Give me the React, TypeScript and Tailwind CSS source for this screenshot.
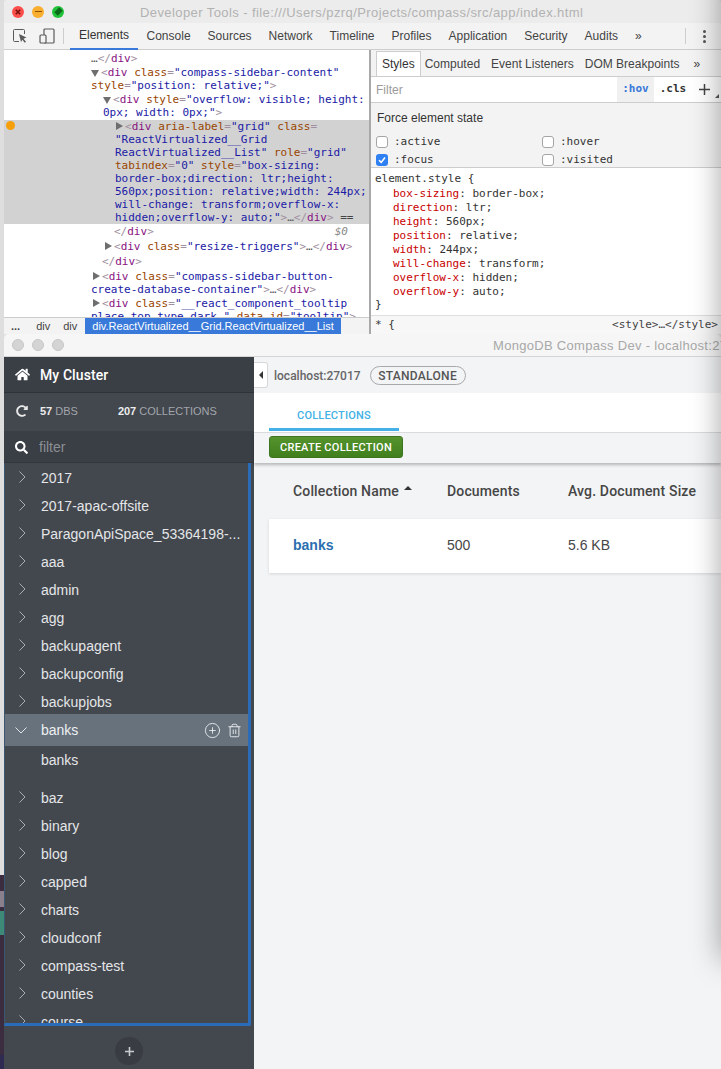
import type { ReactNode } from "react";
import { CirclePlus, Trash2 } from "lucide-react";
import { FaHome, FaRedoAlt, FaSearch } from "react-icons/fa";

const databases1 = ["2017", "2017-apac-offsite", "ParagonApiSpace_53364198-...", "aaa", "admin", "agg", "backupagent", "backupconfig", "backupjobs"];
const databases2 = ["baz", "binary", "blog", "capped", "charts", "cloudconf", "compass-test", "counties", "course"];
const styleProps = [
  ["box-sizing", "border-box"],
  ["direction", "ltr"],
  ["height", "560px"],
  ["position", "relative"],
  ["width", "244px"],
  ["will-change", "transform"],
  ["overflow-x", "hidden"],
  ["overflow-y", "auto"],
];

const T = ({ children }: { children: ReactNode }) => <span className="text-[#881280]">{children}</span>;
const A = ({ children }: { children: ReactNode }) => <span className="text-[#994500]">{children}</span>;
const V = ({ children }: { children: ReactNode }) => <span className="text-[#1a1aa6]">{children}</span>;
const P = ({ children }: { children: ReactNode }) => <span className="text-[#a08fa0]">{children}</span>;

const Line = ({ left, gap = "", children }: { left: string; gap?: string; children: ReactNode }) => (
  <div className={`h-[13px] leading-[13px] whitespace-pre ${left} ${gap}`}>{children}</div>
);

const Caret = ({ open }: { open?: boolean }) => (
  <span
    className={
      open
        ? "inline-block mr-[2px] mb-[-1px] w-0 h-0 border-x-[4px] border-x-transparent border-t-[7px] border-t-[#6e6e6e]"
        : "inline-block mr-[2px] ml-px w-0 h-0 border-y-[4px] border-y-transparent border-l-[7px] border-l-[#6e6e6e]"
    }
  />
);

const Chevron = ({ open }: { open?: boolean }) => (
  <svg width="14" height="14" viewBox="0 0 14 14" fill="none" stroke={open ? "#e4e7ea" : "#a9adb2"} strokeWidth="1">
    {open ? <path d="M1.5 4.5 7 10l5.5-5.5" /> : <path d="M4.5 1.5 10 7l-5.5 5.5" />}
  </svg>
);

const DbRow = ({ name }: { name: string }) => (
  <div className="h-7 shrink-0 flex items-center">
    <div className="w-[36px] pl-[10px] shrink-0">
      <Chevron />
    </div>
    <span className="mt-[2px] text-[14px] text-[#e4e6e8]">{name}</span>
  </div>
);

const TabLabel = ({ children, active }: { children: ReactNode; active?: boolean }) => (
  <div
    className={
      active
        ? "h-[27px] px-[9px] flex items-center text-[#333] border-b-2 border-[#3879d9]"
        : "h-[27px] px-[8.5px] flex items-center text-[#444]"
    }
  >
    {children}
  </div>
);

const StateBox = ({ label, checked }: { label: string; checked?: boolean }) => (
  <div className="flex items-center h-[18px]">
    {checked ? (
      <div className="w-[12px] h-[12px] rounded-[3px] bg-[#2f80f2] flex items-center justify-center">
        <svg width="10" height="10" viewBox="0 0 10 10" fill="none" stroke="#fff" strokeWidth="1.6">
          <path d="M2 5.2 4.2 7.4 8 2.6" />
        </svg>
      </div>
    ) : (
      <div className="w-[12px] h-[12px] rounded-[3px] bg-white border border-[#a5a5a5]" />
    )}
    <span className="ml-[6px] font-['DejaVu_Sans_Mono',monospace] text-[11px] text-[#333]">{label}</span>
  </div>
);

const Light = ({ className, children }: { className: string; children?: ReactNode }) => (
  <div className={`w-3 h-3 rounded-full flex items-center justify-center ${className}`}>{children}</div>
);

function DevTools() {
  return (
    <div className="h-[334px] flex flex-col bg-white rounded-t-[5px] overflow-hidden font-['Liberation_Sans',sans-serif] shrink-0">
      <div className="h-[23px] bg-[#ececec] shrink-0 flex items-center relative">
        <div className="flex gap-2 pl-2">
          <Light className="bg-[#fb4f4b]">
            <svg width="6" height="6" viewBox="0 0 6 6" stroke="#7a0f0c" strokeWidth="1.6">
              <path d="M.8.8l4.4 4.4M5.2.8.8 5.2" />
            </svg>
          </Light>
          <Light className="bg-[#f9ae2f]">
            <div className="w-[7px] h-[1.5px] bg-[#8a5200]" />
          </Light>
          <Light className="bg-[#22c13a]">
            <div className="w-[7px] h-[5px] bg-[#0a6a1a] rotate-[-45deg]" />
          </Light>
        </div>
        <span className="ml-[76px] mt-[2px] text-[13px] text-[#b2b2b2] tracking-[0.41px] whitespace-nowrap">
          Developer Tools - file:///Users/pzrq/Projects/compass/src/app/index.html
        </span>
      </div>

      <div className="h-[27px] bg-[#f3f3f3] border-b border-[#cdcdcd] shrink-0 flex items-center text-[12px]">
        <svg className="ml-[9px]" width="14" height="14" viewBox="0 0 14 14" fill="none">
          <path d="M6 12.5H1.5a1 1 0 0 1-1-1V1.5a1 1 0 0 1 1-1h9a1 1 0 0 1 1 1V5" stroke="#5a5a5a" strokeWidth="1" />
          <path d="M6 5l7.5 3.5-3 1.2 2.5 3-1.2 1-2.4-3L8 13z" fill="#5a5a5a" />
        </svg>
        <svg className="ml-[12px]" width="16" height="16" viewBox="0 0 16 16" fill="none" stroke="#5a5a5a" strokeWidth="1.2">
          <rect x="5" y="1" width="10" height="14" rx="1" />
          <rect x="1" y="7" width="6" height="8" rx="1" fill="#f3f3f3" />
        </svg>
        <div className="ml-[8px] w-px h-4 bg-[#cdcdcd]" />
        <div className="ml-[6px] flex">
          <TabLabel active>Elements</TabLabel>
          <TabLabel>Console</TabLabel>
          <TabLabel>Sources</TabLabel>
          <TabLabel>Network</TabLabel>
          <TabLabel>Timeline</TabLabel>
          <TabLabel>Profiles</TabLabel>
          <TabLabel>Application</TabLabel>
          <TabLabel>Security</TabLabel>
          <TabLabel>Audits</TabLabel>
          <TabLabel>»</TabLabel>
        </div>
        <div className="ml-auto w-px h-4 bg-[#cdcdcd]" />
        <svg className="ml-[17px] mr-[15px]" width="3" height="13" viewBox="0 0 3 13" fill="#555">
          <circle cx="1.5" cy="1.5" r="1.5" />
          <circle cx="1.5" cy="6.5" r="1.5" />
          <circle cx="1.5" cy="11.5" r="1.5" />
        </svg>
      </div>

      <div className="flex-1 flex min-h-0">
        <div className="w-[366px] shrink-0 flex flex-col border-r border-[#a9a9a9] min-h-0">
          <div className="h-[267px] overflow-hidden font-['DejaVu_Sans_Mono',monospace] text-[11px] pt-[2px] shrink-0">
            <Line left="pl-[87px]">
              <span className="text-[#555]">…</span><P>&lt;/</P><T>div</T><P>&gt;</P>
            </Line>
            <Line left="pl-[87px]" gap="mt-px">
              <Caret open /><P>&lt;</P><T>div</T> <A>class</A><P>=</P><V>"compass-sidebar-content"</V>
            </Line>
            <Line left="pl-[87px]">
              <A>style</A><P>=</P><V>"position: relative;"</V><P>&gt;</P>
            </Line>
            <Line left="pl-[99px]" gap="mt-px">
              <Caret open /><P>&lt;</P><T>div</T> <A>style</A><P>=</P><V>"overflow: visible; height:</V>
            </Line>
            <Line left="pl-[99px]">
              <V>0px; width: 0px;"</V><P>&gt;</P>
            </Line>
            <div className="bg-[#d2d2d2] relative mt-px">
              <div className="absolute left-[2px] top-[1px] w-[9px] h-[9px] rounded-full bg-[#f59f0b]" />
              <Line left="pl-[111px]">
                <Caret /><P>&lt;</P><T>div</T> <A>aria-label</A><P>=</P><V>"grid"</V> <A>class</A><P>=</P>
              </Line>
              <Line left="pl-[111px]"><V>"ReactVirtualized__Grid</V></Line>
              <Line left="pl-[111px]">
                <V>ReactVirtualized__List"</V> <A>role</A><P>=</P><V>"grid"</V>
              </Line>
              <Line left="pl-[111px]">
                <A>tabindex</A><P>=</P><V>"0"</V> <A>style</A><P>=</P><V>"box-sizing:</V>
              </Line>
              <Line left="pl-[111px]"><V>border-box;direction: ltr;height:</V></Line>
              <Line left="pl-[111px]"><V>560px;position: relative;width: 244px;</V></Line>
              <Line left="pl-[111px]"><V>will-change: transform;overflow-x:</V></Line>
              <Line left="pl-[111px]">
                <V>hidden;overflow-y: auto;"</V><P>&gt;</P><span className="text-[#555]">…</span><P>&lt;/</P><T>div</T><P>&gt;</P> <span className="text-[#444]">==</span>
              </Line>
            </div>
            <Line left="pl-[110px] pr-[21px] flex justify-between" gap="mt-px">
              <span><P>&lt;/</P><T>div</T><P>&gt;</P></span>
              <span className="italic text-[#8a8a8a]">$0</span>
            </Line>
            <Line left="pl-[100px]" gap="mt-[2px]">
              <Caret /><P>&lt;</P><T>div</T> <A>class</A><P>=</P><V>"resize-triggers"</V><P>&gt;</P><span className="text-[#555]">…</span><P>&lt;/</P><T>div</T><P>&gt;</P>
            </Line>
            <Line left="pl-[98px]" gap="mt-[2px]">
              <P>&lt;/</P><T>div</T><P>&gt;</P>
            </Line>
            <Line left="pl-[88px]" gap="mt-[2px]">
              <Caret /><P>&lt;</P><T>div</T> <A>class</A><P>=</P><V>"compass-sidebar-button-</V>
            </Line>
            <Line left="pl-[87px]">
              <V>create-database-container"</V><P>&gt;</P><span className="text-[#555]">…</span><P>&lt;/</P><T>div</T><P>&gt;</P>
            </Line>
            <Line left="pl-[88px]" gap="mt-px">
              <Caret /><P>&lt;</P><T>div</T> <A>class</A><P>=</P><V>"__react_component_tooltip</V>
            </Line>
            <Line left="pl-[87px]">
              <V>place-top type-dark "</V> <A>data-id</A><P>=</P><V>"tooltip"</V><P>&gt;</P>
            </Line>
          </div>
          <div className="flex-1 bg-[#f3f3f3] border-t border-[#cdcdcd] flex items-center text-[11px] text-[#444] overflow-hidden">
            <span className="ml-[7px] font-bold">...</span>
            <span className="ml-[16px]">div</span>
            <span className="ml-[13px]">div</span>
            <div className="ml-[8px] h-full px-[7px] bg-[#3879d9] text-white flex items-center whitespace-nowrap">
              div.ReactVirtualized__Grid.ReactVirtualized__List
            </div>
          </div>
        </div>

        <div className="flex-1 flex flex-col min-w-0 border-l border-[#a9a9a9]">
          <div className="h-[27px] bg-[#f3f3f3] border-b border-[#cdcdcd] flex items-end text-[12px] text-[#444] pl-[5px] shrink-0 whitespace-nowrap">
            <div className="h-[25px] px-[5px] bg-white border border-b-0 border-[#cdcdcd] flex items-center text-[#333]">Styles</div>
            <div className="h-[25px] ml-[4px] flex items-center">Computed</div>
            <div className="h-[25px] ml-[11px] flex items-center">Event Listeners</div>
            <div className="h-[25px] ml-[11px] flex items-center">DOM Breakpoints</div>
            <div className="h-[25px] ml-[14px] flex items-center">»</div>
          </div>
          <div className="h-[26px] flex items-center text-[12px] bg-white border-b border-[#cdcdcd] shrink-0">
            <span className="ml-[5px] text-[#9b9b9b]">Filter</span>
            <div className="ml-auto w-[37px] h-full bg-[#f0f0f0] flex items-center justify-center font-['DejaVu_Sans_Mono',monospace] text-[11px] font-bold text-[#3879d9]">
              :hov
            </div>
            <div className="w-[38px] flex items-center justify-center font-['DejaVu_Sans_Mono',monospace] text-[11px] font-bold text-[#333]">
              .cls
            </div>
            <div className="w-[29px] pl-[7px] relative h-full flex items-center">
              <svg width="11" height="11" viewBox="0 0 11 11" stroke="#444" strokeWidth="1.5">
                <path d="M5.5 0v11M0 5.5h11" />
              </svg>
              <div className="absolute right-[2px] bottom-[4px] w-0 h-0 border-l-[4px] border-l-transparent border-b-[4px] border-b-[#555]" />
            </div>
          </div>
          <div className="h-[65px] bg-[#f3f3f3] border-b border-[#cdcdcd] pl-[6px] shrink-0">
            <div className="text-[12px] text-[#333] h-[30px] leading-[30px]">Force element state</div>
            <div className="grid grid-cols-[166px_1fr] -ml-px">
              <StateBox label=":active" />
              <StateBox label=":hover" />
              <StateBox label=":focus" checked />
              <StateBox label=":visited" />
            </div>
          </div>
          <div className="h-[148px] bg-white border-b border-[#dedede] font-['DejaVu_Sans_Mono',monospace] text-[11px] text-[#333] pl-[4px] pt-[4px] shrink-0 leading-[14px]">
            <div className="mb-px">element.style {"{"}</div>
            {styleProps.map(([name, value]) => (
              <div key={name} className="pl-[18px]">
                <span className="text-[#c80000]">{name}</span>: {value};
              </div>
            ))}
            <div className="-mt-px">{"}"}</div>
          </div>
          <div className="flex-1 flex items-center justify-between bg-[#f7f7f7] font-['DejaVu_Sans_Mono',monospace] text-[11px] text-[#333] pl-[4px] pr-[3px]">
            <span>* {"{"}</span>
            <span className="text-[#444]">&lt;style&gt;…&lt;/style&gt;</span>
          </div>
        </div>
      </div>
    </div>
  );
}

function Sidebar() {
  return (
    <div className="w-[250px] shrink-0 bg-[#43474e] flex flex-col min-h-0 font-['Liberation_Sans',sans-serif]">
      <div className="h-[36px] bg-[#3a3e45] border-b border-[#2f3237] flex items-center shrink-0">
        <FaHome className="ml-[11px] text-white" size={15} />
        <span className="ml-[10px] mt-px text-[14px] font-medium tracking-[0.1px] text-white font-['Roboto',sans-serif]">My Cluster</span>
      </div>
      <div className="h-[38px] flex items-center pb-[2px] text-[11px] shrink-0">
        <FaRedoAlt className="ml-[12px] text-[#e8e8e8]" size={12} />
        <span className="ml-[12px] font-bold text-[#eceded]">57</span>
        <span className="ml-[3px] text-[#a2a6ab]">DBS</span>
        <span className="ml-[40px] font-bold text-[#eceded]">207</span>
        <span className="ml-[3px] text-[#a2a6ab]">COLLECTIONS</span>
      </div>
      <div className="h-[32px] bg-[#3a3e45] border-b border-[#33363c] flex items-center shrink-0">
        <FaSearch className="ml-[11px] mt-px text-white" size={13} />
        <span className="ml-[11px] mt-px text-[14px] text-[#8b8f94]">filter</span>
      </div>
      <div className="h-[563px] shrink-0 w-[247px] overflow-hidden flex flex-col border-r-[3px] border-b-[3px] border-l border-r-[#2b6cb8] border-b-[#2b6cb8] border-l-[#3d5670] rounded-br-[2px]">
        {databases1.map((name) => (
          <DbRow key={name} name={name} />
        ))}
        <div className="h-8 -mt-px shrink-0 bg-[#67727d] flex items-center">
          <div className="w-[36px] pl-[9px] shrink-0">
            <Chevron open />
          </div>
          <span className="text-[14px] text-[#eef0f2]">banks</span>
          <CirclePlus className="ml-auto text-[#f2f4f5]" size={17} strokeWidth={1.2} />
          <Trash2 className="ml-[6px] mr-[6px] text-[#f2f4f5]" size={15} strokeWidth={1.4} />
        </div>
        <div className="h-7 shrink-0 mb-[9px] flex items-center pl-[36px] text-[14px] text-[#e4e6e8]">banks</div>
        {databases2.map((name) => (
          <DbRow key={name} name={name} />
        ))}
      </div>
      <div className="flex-1 flex items-center justify-center pt-[7px]">
        <div className="w-7 h-7 rounded-full bg-[#393d43] flex items-center justify-center">
          <svg width="9" height="9" viewBox="0 0 9 9" stroke="#c9cbce" strokeWidth="1.6">
            <path d="M4.5 0v9M0 4.5h9" />
          </svg>
        </div>
      </div>
    </div>
  );
}

function Compass() {
  return (
    <div className="flex-1 flex flex-col min-h-0 rounded-t-[5px] overflow-hidden">
      <div className="h-[23px] bg-[#f6f6f6] border-b border-[#d5d5d5] flex items-center shrink-0 relative">
        <div className="flex gap-2 pl-2">
          <Light className="bg-[#d4d4d4] border border-[#c6c6c6]" />
          <Light className="bg-[#d4d4d4] border border-[#c6c6c6]" />
          <Light className="bg-[#d4d4d4] border border-[#c6c6c6]" />
        </div>
        <span className="ml-[429px] mt-[2px] text-[13px] text-[#a8a8a8] tracking-[0.3px] whitespace-nowrap font-['Liberation_Sans',sans-serif]">
          MongoDB Compass Dev - localhost:27017
        </span>
      </div>
      <div className="flex-1 flex min-h-0">
        <Sidebar />
        <div className="flex-1 min-w-0 bg-[#f3f4f6] flex flex-col font-['Roboto',sans-serif]">
          <div className="h-[36px] flex items-center shrink-0">
            <div className="w-[14px] h-[26px] bg-white rounded-r-[3px] border border-l-0 border-[#d8d8d8] flex items-center justify-center">
              <div className="w-0 h-0 border-y-[4px] border-y-transparent border-r-[4px] border-r-[#333]" />
            </div>
            <span className="ml-[6px] mt-px text-[12px] font-medium text-[#666]">localhost:27017</span>
            <div className="ml-[9px] mt-px h-[19px] w-[96px] rounded-full border border-[#a9a9a9] flex items-center justify-center text-[12px] font-medium tracking-[0.3px] text-[#555]">
              STANDALONE
            </div>
          </div>
          <div className="h-[39px] bg-white border-b border-[#dcdee0] pl-[15px] flex shrink-0 box-content">
            <div className="w-[130px] h-[38px] pt-[12px] flex items-center justify-center text-[11px] font-medium tracking-[0.2px] text-[#43b1e5] border-b-[3px] border-[#43b1e5]">
              COLLECTIONS
            </div>
          </div>
          <div className="h-[30px] flex items-start pt-[3px] pl-[15px] shrink-0 shadow-[0_2px_3px_rgba(0,0,0,0.25)] relative">
            <button className="w-[134px] h-[22px] pt-[2px] rounded-[3px] bg-linear-to-b from-[#55932d] to-[#417f1d] border border-[#3f7520] text-[11px] font-medium tracking-[0.25px] text-white">
              CREATE COLLECTION
            </button>
          </div>
          <div className="grid grid-cols-[154px_121px_1fr] pl-[39px] pt-[18px] h-[56px] text-[14px] font-medium tracking-[0.15px] text-[#464646] shrink-0 whitespace-nowrap">
            <div className="flex items-start">
              Collection Name
              <div className="ml-[5px] mt-[5px] w-0 h-0 border-x-[4.5px] border-x-transparent border-b-[4px] border-b-[#333]" />
            </div>
            <div>Documents</div>
            <div>Avg. Document Size</div>
          </div>
          <div className="ml-[15px] h-[54px] pb-[2px] bg-white shadow-[0_1px_3px_rgba(0,0,0,0.12)] grid grid-cols-[154px_121px_1fr] pl-[24px] items-center text-[14px] text-[#464646] shrink-0 font-['Liberation_Sans',sans-serif]">
            <span className="font-bold text-[#2a6eb0]">banks</span>
            <span>500</span>
            <span>5.6 KB</span>
          </div>
        </div>
      </div>
    </div>
  );
}

export default function App() {
  return (
    <div className="w-[721px] h-[1069px] flex overflow-hidden relative bg-[#e4e4e4]">
      <div className="w-[4px] shrink-0 flex flex-col">
        <div className="h-[875px] bg-[#dedede]" />
        <div className="h-[16px] bg-[#3b2c3f]" />
        <div className="h-[16px] bg-[#8a7f8c]" />
        <div className="h-[4px] bg-[#3b2c3f]" />
        <div className="h-[24px] bg-[#3e8a78]" />
        <div className="h-[120px] bg-[#3b2c3f]" />
        <div className="h-[14px] bg-[#2f2a52]" />
      </div>
      <div className="flex-1 min-w-0 flex flex-col">
        <DevTools />
        <Compass />
      </div>
      <div className="absolute left-[721px] top-[-40px] w-[40px] h-[1000px] shadow-[0_0_30px_rgba(0,0,0,0.36)]" />
    </div>
  );
}
